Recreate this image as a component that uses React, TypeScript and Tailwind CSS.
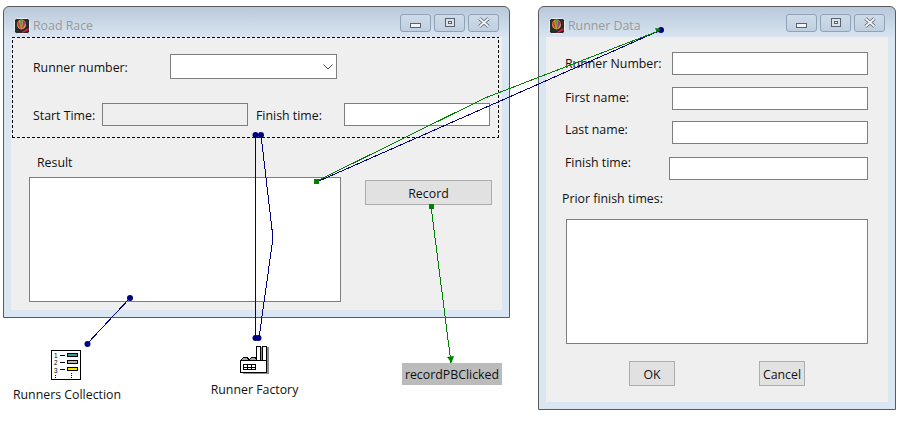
import React from "react";

const font = { fontFamily: '"Open Sans", sans-serif' };

function AppIcon() {
  return (
    <svg width="16" height="16" viewBox="0 0 16 16" className="shrink-0">
      <rect x="0.5" y="0.5" width="15" height="15" rx="2" fill="#2a2a2a" stroke="#e8eef4" />
      <ellipse cx="7.5" cy="6.5" rx="4.5" ry="5" fill="#d8a23a" />
      <path d="M3.5 5 C4 9 6 10 7 11.5 L5 3 Z" fill="#c8402c" />
      <path d="M6 2 L7 11.5 L8.5 2 Z" fill="#4e9a48" />
      <path d="M9 2 L8 11.5 L12 5 Z" fill="#a63a7a" />
      <path d="M7 14.5 L14.5 10 L14.5 12 L10 14.5 Z" fill="#e0204a" />
    </svg>
  );
}

function CtrlButton({ kind }: { kind: "min" | "max" | "close" }) {
  return (
    <div className="w-[31px] h-[18px] rounded-[3px] border border-[#8fa2b8] bg-gradient-to-b from-[#cfdbe8] to-[#c0cfe0] flex items-center justify-center">
      <svg width="14" height="12" viewBox="0 0 14 12" shapeRendering="crispEdges">
        {kind === "min" && <rect x="1.5" y="6.5" width="10" height="4" fill="#f2f5f8" stroke="#5a626e" />}
        {kind === "max" && (
          <>
            <rect x="2.5" y="1.5" width="9" height="8" fill="#d8e2ec" stroke="#5a626e" />
            <rect x="5" y="4" width="4" height="3" fill="#5a626e" />
            <rect x="6" y="5" width="2" height="1" fill="#e8eef4" />
          </>
        )}
        {kind === "close" && (
          <g shapeRendering="geometricPrecision">
            <path d="M2.5 1.5 L11.5 9.5 M11.5 1.5 L2.5 9.5" stroke="#5a626e" strokeWidth="3.4" />
            <path d="M2.5 1.5 L11.5 9.5 M11.5 1.5 L2.5 9.5" stroke="#f0f3f6" strokeWidth="1.8" />
          </g>
        )}
      </svg>
    </div>
  );
}

function TitleBar({ title }: { title: string }) {
  return (
    <div className="h-[30px] shrink-0 flex items-center pl-[10px] pr-[10px] pt-[7px]">
      <AppIcon />
      <span className="ml-[3px] text-[12.35px] leading-[18px] text-[#9a9a9a]">{title}</span>
      <div className="ml-auto flex gap-[3px] -mt-[5px]">
        <CtrlButton kind="min" />
        <CtrlButton kind="max" />
        <CtrlButton kind="close" />
      </div>
    </div>
  );
}

function Box({ className }: { className: string }) {
  return <div className={"border border-[#7e7e7e] " + className} />;
}

function Label({ children, className = "" }: { children: React.ReactNode; className?: string }) {
  return <div className={"text-[12.35px] leading-[18px] text-[#111] whitespace-nowrap " + className}>{children}</div>;
}

function Btn({ children, className }: { children: React.ReactNode; className: string }) {
  return (
    <div className={"h-[25px] pt-[3px] border border-[#adadad] bg-[#e1e1e1] flex items-center justify-center text-[12.35px] text-[#111] " + className}>
      {children}
    </div>
  );
}

function RoadRace() {
  return (
    <div className="absolute left-[3px] top-[6px] w-[507px] h-[312px] border border-[#5a5a5a] rounded-t-[6px] flex flex-col bg-gradient-to-b from-[#b9c9da] via-[#dae6f2] via-[10%] to-[#dae6f2]">
      <TitleBar title="Road Race" />
      <div className="mx-[7px] mb-[7px] flex-1 bg-[#efefef]">
        <div className="ml-px w-[487px] h-[101px] pl-[21px] pt-[17px] [background:repeating-linear-gradient(90deg,#000_0_3px,transparent_3px_5px)_top/100%_1px_no-repeat,repeating-linear-gradient(90deg,#000_0_3px,transparent_3px_5px)_bottom/100%_1px_no-repeat,repeating-linear-gradient(0deg,#000_0_3px,transparent_3px_5px)_left/1px_100%_no-repeat,repeating-linear-gradient(0deg,#000_0_3px,transparent_3px_5px)_right/1px_100%_no-repeat]">
          <div className="flex items-center h-[25px]">
            <Label className="w-[137px] pt-[2px]">Runner number:</Label>
            <div className="w-[167px] h-[25px] border border-[#7e7e7e] bg-white flex items-center justify-end pr-[3px]">
              <svg width="10" height="6" viewBox="0 0 10 6">
                <path d="M0.5 0.5 L5 5 L9.5 0.5" fill="none" stroke="#555" />
              </svg>
            </div>
          </div>
          <div className="flex items-center h-[23px] mt-[24px]">
            <Label className="w-[69px] pt-[2px]">Start Time:</Label>
            <Box className="w-[146px] h-[23px] bg-[#efefef]" />
            <Label className="w-[88px] ml-[8px] pt-[2px]">Finish time:</Label>
            <Box className="w-[146px] h-[23px] bg-white" />
          </div>
        </div>
        <div className="flex">
          <div className="ml-[18px] w-[312px]">
            <Label className="mt-[16px] pl-[8px]">Result</Label>
            <Box className="mt-[5px] w-[312px] h-[125px] bg-white" />
          </div>
          <Btn className="ml-[24px] mt-[42px] w-[127px]">Record</Btn>
        </div>
      </div>
    </div>
  );
}

function Row({ label, labelW, mt, labelMt, inputW }: { label: string; labelW: string; mt: string; labelMt: string; inputW: string }) {
  return (
    <div className={"flex h-[23px] pl-[19px] " + mt}>
      <Label className={labelW + " " + labelMt}>{label}</Label>
      <Box className={inputW + " h-[23px] bg-white"} />
    </div>
  );
}

function RunnerData() {
  return (
    <div className="absolute left-[538px] top-[6px] w-[358px] h-[404px] border border-[#5a5a5a] rounded-t-[6px] flex flex-col bg-gradient-to-b from-[#b9c9da] via-[#dae6f2] via-[8%] to-[#dae6f2]">
      <TitleBar title="Runner Data" />
      <div className="mx-[7px] mb-[7px] flex-1 bg-[#efefef]">
        <Row label="Runner Number:" labelW="w-[107px]" mt="mt-[15px]" labelMt="mt-[3px]" inputW="w-[196px]" />
        <Row label="First name:" labelW="w-[107px]" mt="mt-[12px]" labelMt="mt-[2px]" inputW="w-[196px]" />
        <Row label="Last name:" labelW="w-[107px]" mt="mt-[11px]" labelMt="mt-0" inputW="w-[196px]" />
        <Row label="Finish time:" labelW="w-[104px]" mt="mt-[13px]" labelMt="-mt-[3px]" inputW="w-[199px]" />
        <Label className="mt-[10px] pl-[16px]">Prior finish times:</Label>
        <Box className="ml-[20px] mt-[11px] w-[302px] h-[125px] bg-white" />
        <div className="flex mt-[17px] pl-[83px]">
          <Btn className="w-[46px]">OK</Btn>
          <Btn className="w-[46px] ml-[84px]">Cancel</Btn>
        </div>
      </div>
    </div>
  );
}

const NAVY = "#000080";
const GREEN = "#008000";

function Wires() {
  return (
    <svg className="absolute left-0 top-0 pointer-events-none" width="905" height="422" viewBox="0 0 905 422">
      <g fill="none" strokeWidth="1" stroke={NAVY} shapeRendering="crispEdges">
        <path d="M255.5 135 L255.5 338" />
        <path d="M261 135 L273 238 L259 338" />
        <path d="M130 298 L87 344" />
        <path d="M319 181 L661 30" />
      </g>
      <g fill="none" strokeWidth="1" stroke={GREEN} shapeRendering="crispEdges">
        <path d="M317 181 L485 98 L661 30" />
        <path d="M431 206 L451 363" />
      </g>
      <g fill={NAVY}>
        <circle cx="255.5" cy="135" r="3" />
        <circle cx="261" cy="135" r="3" />
        <circle cx="255.5" cy="338" r="3" />
        <circle cx="258.5" cy="338" r="3" />
        <circle cx="130" cy="298" r="3" />
        <circle cx="87.5" cy="344" r="3" />
        <circle cx="661" cy="30" r="3" />
      </g>
      <g fill={GREEN} shapeRendering="crispEdges">
        <rect x="314" y="179" width="5" height="5" />
        <rect x="428.5" y="204" width="5" height="5" />
      </g>
      <path d="M661 29 L655 28 L657 33 Z" fill={GREEN} />
      <path d="M447 357 L454 356 L451.5 363 Z" fill={GREEN} />
    </svg>
  );
}

function CollectionIcon() {
  return (
    <svg width="30" height="30" viewBox="0 0 30 30" shapeRendering="crispEdges">
      <rect x="0.5" y="0.5" width="29" height="28.5" fill="#fff" stroke="#000" />
      <text x="3" y="8" fontSize="6.4" fontFamily="Liberation Sans, sans-serif" fill="#000">1</text>
      <text x="3" y="15.4" fontSize="6.4" fontFamily="Liberation Sans, sans-serif" fill="#000">2</text>
      <text x="3" y="22.8" fontSize="6.4" fontFamily="Liberation Sans, sans-serif" fill="#000">3</text>
      <rect x="9" y="5" width="5" height="1" fill="#000" />
      <rect x="9" y="12" width="5" height="1" fill="#000" />
      <rect x="9" y="19" width="5" height="1" fill="#000" />
      <rect x="16.5" y="3.5" width="10" height="3" fill="#3a9a94" stroke="#000" />
      <rect x="16.5" y="10.5" width="10" height="3" fill="#b4b4b4" stroke="#000" />
      <rect x="16.5" y="17.5" width="10" height="3" fill="#f5e400" stroke="#000" />
      <rect x="4" y="25" width="1" height="1" fill="#000" />
      <rect x="4" y="27" width="1" height="1" fill="#000" />
      <rect x="20" y="23" width="1" height="1" fill="#000" />
      <rect x="20" y="25" width="1" height="1" fill="#000" />
      <rect x="20" y="27" width="1" height="1" fill="#000" />
    </svg>
  );
}

function FactoryIcon() {
  return (
    <svg width="30" height="29" viewBox="0 0 30 29" shapeRendering="crispEdges">
      <path d="M18 1 H29 V28 H3 V26 H18 Z" fill="#8c8c8c" />
      <rect x="16.5" y="0.5" width="4" height="14" fill="#fff" stroke="#000" />
      <rect x="22.5" y="0.5" width="4" height="14" fill="#fff" stroke="#000" />
      <rect x="0.5" y="14.5" width="26" height="12" fill="#fff" stroke="#000" />
      <path d="M1 14 L4 11 H7 L9 14 L12 11 H15 L17 14 Z" fill="#a8a8a8" stroke="#000" />
      <rect x="3.5" y="18.5" width="12" height="5" fill="#fff" stroke="#000" />
      <rect x="7" y="19" width="1" height="4" fill="#000" />
      <rect x="11" y="19" width="1" height="4" fill="#000" />
      <rect x="4" y="21" width="11" height="1" fill="#000" />
    </svg>
  );
}

function Caption({ icon, text, className, iconClass }: { icon: React.ReactNode; text: string; className: string; iconClass: string }) {
  return (
    <div className={"absolute flex flex-col items-center " + className}>
      <div className={iconClass}>{icon}</div>
      <Label>{text}</Label>
    </div>
  );
}

export default function App() {
  return (
    <div className="relative w-[905px] h-[422px] bg-white overflow-hidden" style={font}>
      <RoadRace />
      <RunnerData />
      <Caption icon={<CollectionIcon />} text="Runners Collection" className="left-[13px] top-[350px] w-[108px]" iconClass="mb-[6px] -ml-[3px]" />
      <Caption icon={<FactoryIcon />} text="Runner Factory" className="left-[211px] top-[346px] w-[87px]" iconClass="mb-[6px]" />
      <div className="absolute left-[402px] top-[363px] w-[100px] h-[22px] pt-[2px] bg-[#bbbbbb] flex items-center justify-center text-[12.35px] text-[#111]">
        recordPBClicked
      </div>
      <Wires />
    </div>
  );
}
